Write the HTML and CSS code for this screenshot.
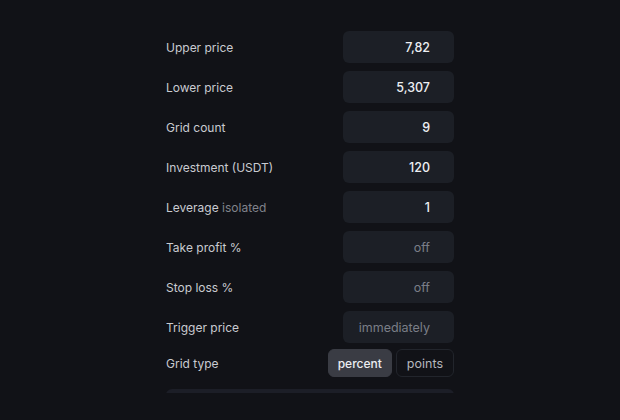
FILE: index.html
```html
<!DOCTYPE html>
<html lang="en">
<head>
  <meta charset="UTF-8" />
  <meta name="viewport" content="width=device-width, initial-scale=1.0" />
  <title>Grid bot settings</title>
  <link rel="stylesheet" href="styles.css">
</head>
<body>
  <div class="panel">
    <div class="row">
      <span class="label">Upper price</span>
      <div class="field">7,82</div>
    </div>
    <div class="row">
      <span class="label">Lower price</span>
      <div class="field">5,307</div>
    </div>
    <div class="row">
      <span class="label">Grid count</span>
      <div class="field">9</div>
    </div>
    <div class="row">
      <span class="label">Investment (USDT)</span>
      <div class="field">120</div>
    </div>
    <div class="row">
      <span class="label">Leverage <span class="muted">isolated</span></span>
      <div class="field">1</div>
    </div>
    <div class="row">
      <span class="label">Take profit %</span>
      <div class="field empty">off</div>
    </div>
    <div class="row">
      <span class="label">Stop loss %</span>
      <div class="field empty">off</div>
    </div>
    <div class="row">
      <span class="label">Trigger price</span>
      <div class="field empty">immediately</div>
    </div>
    <div class="row type-row">
      <span class="label">Grid type</span>
      <div class="toggle">
        <button class="opt active">percent</button>
        <button class="opt">points</button>
      </div>
    </div>
    <div class="submit"></div>
  </div>
</body>
</html>
```

FILE: styles.css
```css
body {
  margin: 0;
  background: #111217;
  font-family: 'Inter', 'Liberation Sans', sans-serif;
  font-size: 12px;
  color: #c9cbd1;
  height: 100vh;
  overflow: hidden;
}

.panel {
  width: 288px;
  margin: 0 auto;
  padding-top: 31px;
  height: 362px;
  overflow: hidden;
  display: flex;
  flex-direction: column;
  gap: 8px;
}

.row {
  display: flex;
  justify-content: space-between;
  align-items: center;
}

.label {
  color: #c9cbd1;
}

.muted {
  color: #80838b;
}

.field {
  width: 111px;
  height: 32px;
  box-sizing: border-box;
  padding-right: 24px;
  border-radius: 6px;
  background: #1c1f26;
  display: flex;
  align-items: center;
  justify-content: flex-end;
  color: #eceef2;
  font-size: 12.5px;
  font-weight: 500;
}

.field.empty {
  color: #7a7e86;
  font-weight: 400;
}

.type-row {
  margin-top: -2px;
}

.toggle {
  display: flex;
  gap: 4px;
}

.opt {
  height: 28px;
  padding: 0 10px;
  border-radius: 6px;
  border: 1px solid #22252c;
  background: #111217;
  color: #b5b7bd;
  font-family: inherit;
  font-size: 12.5px;
  font-weight: 400;
}

.opt.active {
  padding: 0 9px;
  background: #3a3c44;
  border-color: #3a3c44;
  color: #eceef2;
  font-weight: 500;
  font-size: 12px;
}

.submit {
  margin-top: 4px;
  height: 40px;
  border-radius: 6px;
  background: #1c1e27;
  flex-shrink: 0;
}
```
